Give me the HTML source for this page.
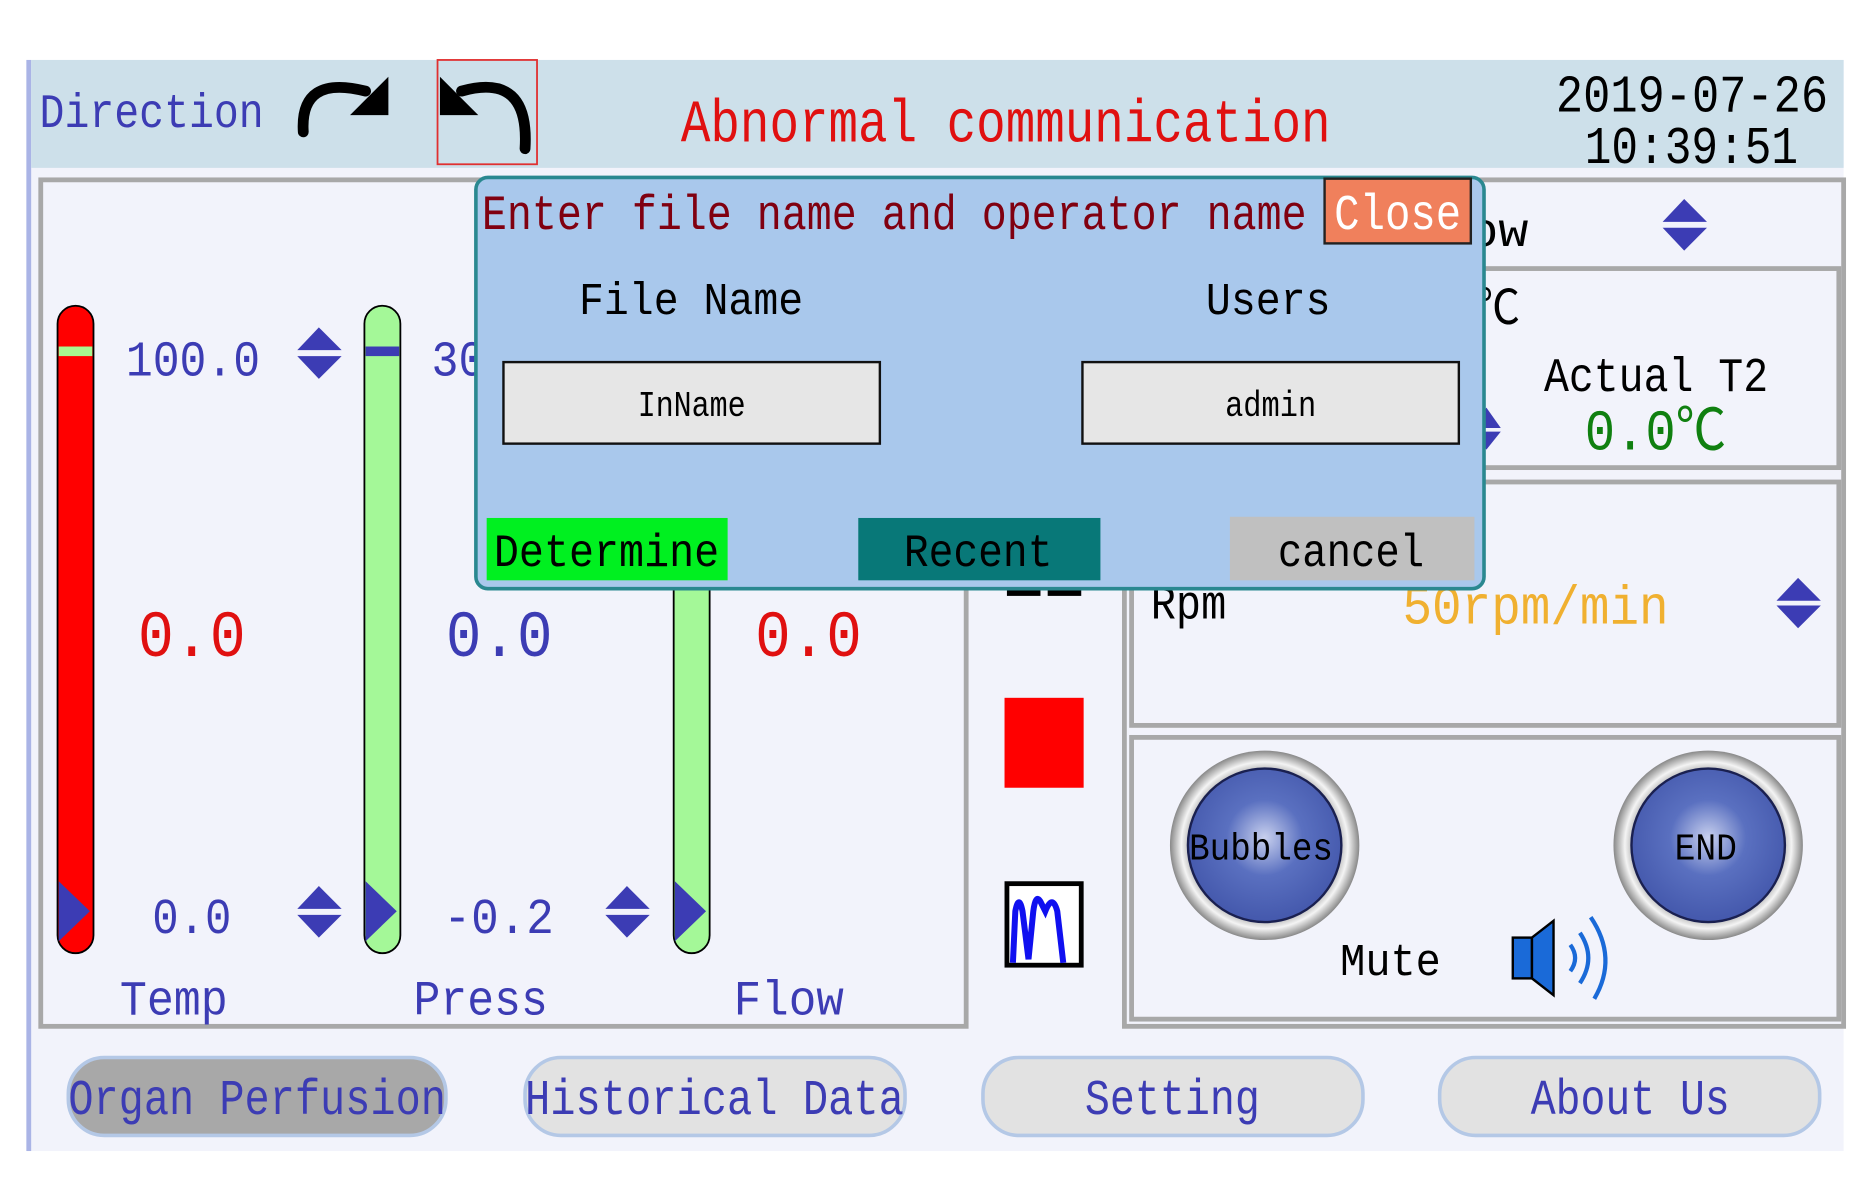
<!DOCTYPE html>
<html><head><meta charset="utf-8"><style>
html,body{margin:0;padding:0;background:#fff;width:1870px;height:1193px;overflow:hidden}
svg{display:block}
text{font-family:"Liberation Mono","Noto Sans CJK SC",monospace}
</style></head><body>
<svg width="1870" height="1193" viewBox="0 0 1560 995" preserveAspectRatio="none" xmlns="http://www.w3.org/2000/svg">
<defs>
<radialGradient id="rg" cx="0.5" cy="0.45" r="0.55"><stop offset="0" stop-color="#c8d0ee"/><stop offset="0.45" stop-color="#5a70c0"/><stop offset="1" stop-color="#4458ac"/></radialGradient>
<radialGradient id="ring" cx="0.5" cy="0.5" r="0.5"><stop offset="0.75" stop-color="#999"/><stop offset="0.88" stop-color="#f4f4f4"/><stop offset="1" stop-color="#888"/></radialGradient>
</defs>
<rect x="0" y="0" width="1560" height="995" fill="#fff"/>
<rect x="22" y="50" width="1516" height="910" fill="#f2f3fb"/>
<rect x="22" y="50" width="4" height="910" fill="#aab4e6"/>
<rect x="26" y="50" width="1512" height="90" fill="#cde0ea"/>
<text x="33" y="106" font-size="40" fill="#3c3cb4" textLength="187" lengthAdjust="spacingAndGlyphs">Direction</text>
<path d="M253,110 Q250,62 305,76" fill="none" stroke="#000" stroke-width="9" stroke-linecap="round"/>
<polygon points="292,96 324,64 324,96" fill="#000"/>
<rect x="365" y="50" width="83" height="87" fill="none" stroke="#e03030" stroke-width="1.5"/>
<path d="M438,124 Q442,60 385,76" fill="none" stroke="#000" stroke-width="9" stroke-linecap="round"/>
<polygon points="367,64 367,96 399,96" fill="#000"/>
<text x="568" y="118" font-size="50" fill="#e01010" textLength="542" lengthAdjust="spacingAndGlyphs">Abnormal communication</text>
<text x="1298" y="93" font-size="44" fill="#000" textLength="227" lengthAdjust="spacingAndGlyphs">2019-07-26</text>
<text x="1322" y="136" font-size="44" fill="#000" textLength="178" lengthAdjust="spacingAndGlyphs">10:39:51</text>
<rect x="34" y="150" width="772" height="706" fill="#f2f3fb" stroke="#a8a8a8" stroke-width="4"/>
<rect x="938" y="150" width="600" height="706" fill="#f2f3fb" stroke="#a8a8a8" stroke-width="4"/>
<rect x="944" y="224" width="590" height="166" fill="#f2f3fb" stroke="#a8a8a8" stroke-width="4"/>
<rect x="944" y="402" width="590" height="203" fill="#f2f3fb" stroke="#a8a8a8" stroke-width="4"/>
<rect x="944" y="615" width="590" height="235" fill="#f2f3fb" stroke="#a8a8a8" stroke-width="4"/>
<rect x="48" y="255" width="30" height="540" rx="15" fill="#ff0000" stroke="#000" stroke-width="1.5"/>
<rect x="49" y="289" width="28" height="8" fill="#a8f890"/>
<polygon points="49,735 75,760 49,785" fill="#3c3cb4"/>
<rect x="304" y="255" width="30" height="540" rx="15" fill="#a4f898" stroke="#000" stroke-width="1.5"/>
<rect x="305" y="289" width="28" height="8" fill="#3c3cb4"/>
<polygon points="305,735 331,760 305,785" fill="#3c3cb4"/>
<rect x="562" y="255" width="30" height="540" rx="15" fill="#a4f898" stroke="#000" stroke-width="1.5"/>
<polygon points="563,735 589,760 563,785" fill="#3c3cb4"/>
<g fill="#3c3cb4">
<polygon points="266,273 285,292 248,292"/><polygon points="248,297 285,297 266,316"/>
<polygon points="266,739 285,758 248,758"/><polygon points="248,763 285,763 266,782"/>
<polygon points="523,739 542,758 505,758"/><polygon points="505,763 542,763 523,782"/>
<polygon points="1405,166 1424,185 1387,185"/><polygon points="1387,190 1424,190 1405,209"/>
<polygon points="1500,482 1519,501 1482,501"/><polygon points="1482,505 1519,505 1500,524"/>
<polygon points="1240,340 1252,357 1228,357"/><polygon points="1228,360 1252,360 1240,375"/>
</g>
<text x="105" y="313" font-size="42" fill="#3c3cb4" textLength="112" lengthAdjust="spacingAndGlyphs">100.0</text>
<text x="360" y="313" font-size="42" fill="#3c3cb4" textLength="45" lengthAdjust="spacingAndGlyphs">30</text>
<text x="115" y="547" font-size="55" fill="#e01010" textLength="90" lengthAdjust="spacingAndGlyphs">0.0</text>
<text x="372" y="547" font-size="55" fill="#3c3cb4" textLength="89" lengthAdjust="spacingAndGlyphs">0.0</text>
<text x="630" y="547" font-size="55" fill="#e01010" textLength="89" lengthAdjust="spacingAndGlyphs">0.0</text>
<text x="127" y="778" font-size="42" fill="#3c3cb4" textLength="66" lengthAdjust="spacingAndGlyphs">0.0</text>
<text x="370" y="778" font-size="42" fill="#3c3cb4" textLength="92" lengthAdjust="spacingAndGlyphs">-0.2</text>
<text x="100" y="846" font-size="41" fill="#3c3cb4" textLength="90" lengthAdjust="spacingAndGlyphs">Temp</text>
<text x="345" y="846" font-size="41" fill="#3c3cb4" textLength="112" lengthAdjust="spacingAndGlyphs">Press</text>
<text x="612" y="846" font-size="41" fill="#3c3cb4" textLength="92" lengthAdjust="spacingAndGlyphs">Flow</text>
<rect x="840" y="484" width="28" height="13" fill="#000"/><rect x="874" y="484" width="28" height="13" fill="#000"/>
<rect x="838" y="582" width="66" height="75" fill="#ff0000"/>
<rect x="840" y="737" width="62" height="68" fill="#fff" stroke="#000" stroke-width="4"/>
<path d="M845,803 L847,760 Q850,745 853,760 L858,800 L862,760 Q864,745 868,752 L872,760 Q878,745 882,760 L887,803" fill="none" stroke="#1010f0" stroke-width="5"/>
<text x="1225" y="205" font-size="40" fill="#000" textLength="50" lengthAdjust="spacingAndGlyphs">ow</text>
<text x="1232" y="270" font-size="40" fill="#000" textLength="36" lengthAdjust="spacingAndGlyphs">℃</text>
<text x="1288" y="326" font-size="40" fill="#000" textLength="187" lengthAdjust="spacingAndGlyphs">Actual T2</text>
<text x="1322" y="375" font-size="48" fill="#108010" textLength="118" lengthAdjust="spacingAndGlyphs">0.0℃</text>
<text x="960" y="516" font-size="40" fill="#000" textLength="63" lengthAdjust="spacingAndGlyphs">Rpm</text>
<text x="1170" y="520" font-size="46" fill="#f0b030" textLength="222" lengthAdjust="spacingAndGlyphs">50rpm/min</text>
<circle cx="1055" cy="705" r="79" fill="url(#ring)"/>
<circle cx="1055" cy="705" r="64" fill="url(#rg)" stroke="#1a2050" stroke-width="2"/>
<text x="992" y="717" font-size="32" fill="#000" textLength="120" lengthAdjust="spacingAndGlyphs">Bubbles</text>
<circle cx="1425" cy="705" r="79" fill="url(#ring)"/>
<circle cx="1425" cy="705" r="64" fill="url(#rg)" stroke="#1a2050" stroke-width="2"/>
<text x="1397" y="717" font-size="32" fill="#000" textLength="52" lengthAdjust="spacingAndGlyphs">END</text>
<text x="1118" y="813" font-size="38" fill="#000" textLength="84" lengthAdjust="spacingAndGlyphs">Mute</text>
<rect x="1262" y="782" width="16" height="34" fill="#1a6ad8" stroke="#000" stroke-width="2"/>
<polygon points="1278,782 1296,768 1296,830 1278,816" fill="#1a6ad8" stroke="#000" stroke-width="2"/>
<g fill="none" stroke="#1a6ad8" stroke-width="3.5">
<path d="M1310,788 Q1318,799 1310,810"/><path d="M1318,778 Q1332,799 1318,820"/><path d="M1327,765 Q1350,799 1330,833"/>
</g>
<rect x="57" y="882" width="315" height="65" rx="30" fill="#a8a8a8" stroke="#b4c8e6" stroke-width="3"/>
<text x="57" y="929" font-size="42" fill="#3c3cb4" textLength="315" lengthAdjust="spacingAndGlyphs">Organ Perfusion</text>
<rect x="438" y="882" width="317" height="65" rx="30" fill="#e2e2e2" stroke="#b4c8e6" stroke-width="3"/>
<text x="438" y="929" font-size="42" fill="#3c3cb4" textLength="316" lengthAdjust="spacingAndGlyphs">Historical Data</text>
<rect x="820" y="882" width="317" height="65" rx="30" fill="#e2e2e2" stroke="#b4c8e6" stroke-width="3"/>
<text x="905" y="929" font-size="42" fill="#3c3cb4" textLength="146" lengthAdjust="spacingAndGlyphs">Setting</text>
<rect x="1201" y="882" width="317" height="65" rx="30" fill="#e2e2e2" stroke="#b4c8e6" stroke-width="3"/>
<text x="1277" y="929" font-size="42" fill="#3c3cb4" textLength="166" lengthAdjust="spacingAndGlyphs">About Us</text>
<rect x="397" y="148" width="841" height="343" rx="10" fill="#a9c8ec" stroke="#2a8890" stroke-width="3"/>
<text x="402" y="191" font-size="41" fill="#800010" textLength="688" lengthAdjust="spacingAndGlyphs">Enter file name and operator name</text>
<rect x="1105" y="149" width="122" height="54" fill="#f0805c" stroke="#222" stroke-width="2"/>
<text x="1113" y="191" font-size="42" fill="#fff" textLength="106" lengthAdjust="spacingAndGlyphs">Close</text>
<text x="483" y="262" font-size="38" fill="#000" textLength="187" lengthAdjust="spacingAndGlyphs">File Name</text>
<text x="1006" y="262" font-size="38" fill="#000" textLength="104" lengthAdjust="spacingAndGlyphs">Users</text>
<rect x="420" y="302" width="314" height="68" fill="#e6e6e6" stroke="#111" stroke-width="2"/>
<text x="532" y="347" font-size="30" fill="#000" textLength="90" lengthAdjust="spacingAndGlyphs">InName</text>
<rect x="903" y="302" width="314" height="68" fill="#e6e6e6" stroke="#111" stroke-width="2"/>
<text x="1022" y="347" font-size="30" fill="#000" textLength="76" lengthAdjust="spacingAndGlyphs">admin</text>
<rect x="406" y="432" width="201" height="52" fill="#00f020"/>
<text x="412" y="472" font-size="39" fill="#000" textLength="188" lengthAdjust="spacingAndGlyphs">Determine</text>
<rect x="716" y="432" width="202" height="52" fill="#087878"/>
<text x="754" y="472" font-size="39" fill="#000" textLength="124" lengthAdjust="spacingAndGlyphs">Recent</text>
<rect x="1026" y="431" width="204" height="53" fill="#c0c0c0"/>
<text x="1066" y="472" font-size="39" fill="#000" textLength="122" lengthAdjust="spacingAndGlyphs">cancel</text>
</svg>
</body></html>
